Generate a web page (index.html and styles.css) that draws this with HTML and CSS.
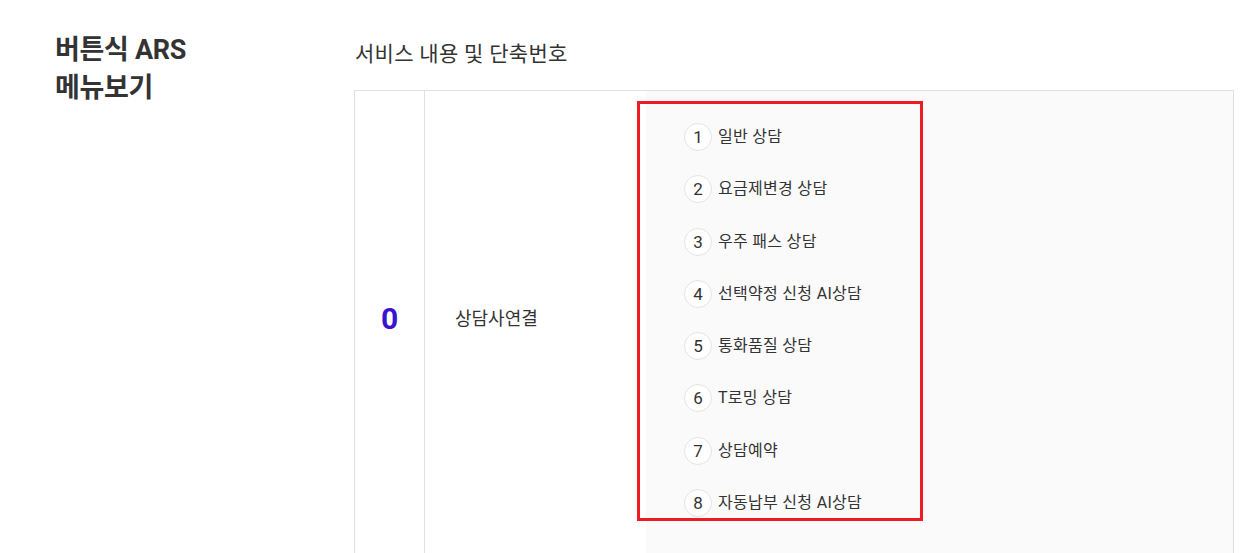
FILE: index.html
```html
<!DOCTYPE html>
<html lang="ko">
<head>
<meta charset="utf-8">
<link rel="stylesheet" href="styles.css">
</head>
<body>
<div class="page">
  <h2 class="title">버튼식 ARS<br>메뉴보기</h2>
  <div class="content">
    <h3 class="subtitle">서비스 내용 및 단축번호</h3>
    <div class="table">
      <div class="row">
        <div class="cell num"><span>0</span></div>
        <div class="cell name"><span>상담사연결</span></div>
        <div class="cell menu">
          <ul class="list">
            <li><span class="circle">1</span><span class="label">일반 상담</span></li>
            <li><span class="circle">2</span><span class="label">요금제변경 상담</span></li>
            <li><span class="circle">3</span><span class="label">우주 패스 상담</span></li>
            <li><span class="circle">4</span><span class="label">선택약정 신청 AI상담</span></li>
            <li><span class="circle">5</span><span class="label">통화품질 상담</span></li>
            <li><span class="circle">6</span><span class="label">T로밍 상담</span></li>
            <li><span class="circle">7</span><span class="label">상담예약</span></li>
            <li><span class="circle">8</span><span class="label">자동납부 신청 AI상담</span></li>
          </ul>
        </div>
        <div class="highlight"></div>
      </div>
    </div>
  </div>
</div>
</body>
</html>
```

FILE: styles.css
```css
* { box-sizing: border-box; }
html, body { margin: 0; padding: 0; background: #fff; }
body {
  font-family: "Roboto", "Noto Sans CJK KR", sans-serif;
  color: #333;
  overflow: hidden;
  height: 553px;
}
.page {
  display: flex;
  padding-left: 55px;
}
.title {
  width: 299px;
  flex: none;
  margin: 0;
  padding-top: 31px;
  font-size: 27px;
  line-height: 38px;
  font-weight: 700;
  letter-spacing: -0.3px;
  color: #333;
}
.content {
  width: 880px;
  flex: none;
}
.subtitle {
  margin: 0;
  padding-top: 39px;
  padding-left: 1px;
  height: 90px;
  font-size: 21px;
  line-height: 31px;
  font-weight: 400;
  letter-spacing: 0.3px;
  color: #333;
}
.table {
  border: 1px solid #e0e0e0;
  border-bottom: none;
}
.row {
  position: relative;
  display: grid;
  grid-template-columns: 70px 221px 1fr;
  height: 470px;
}
.cell.num {
  border-right: 1px solid #e0e0e0;
  text-align: center;
  padding-top: 211px;
  font-size: 30px;
  line-height: 34px;
  font-weight: 700;
  color: #3a12cf;
}
.cell.name {
  padding-top: 215px;
  padding-left: 30px;
  font-size: 18px;
  line-height: 26px;
  letter-spacing: 0;
}
.cell.menu {
  background: #fafafa;
}
.list {
  list-style: none;
  margin: 0;
  padding: 32px 0 0 38px;
  display: flex;
  flex-direction: column;
  gap: 24.3px;
}
.list li {
  display: flex;
  align-items: center;
  height: 28px;
}
.circle {
  width: 28px;
  height: 28px;
  border: 1px solid #e4e4e4;
  border-radius: 50%;
  background: #fff;
  display: flex;
  align-items: center;
  justify-content: center;
  font-size: 17px;
  color: #333;
  margin-right: 6px;
  flex: none;
}
.label {
  font-size: 16px;
  letter-spacing: 0.3px;
  line-height: 22px;
}
.highlight {
  position: absolute;
  left: 282px;
  top: 10px;
  width: 286px;
  height: 420px;
  border: 3px solid #ed1c24;
  pointer-events: none;
}
```
